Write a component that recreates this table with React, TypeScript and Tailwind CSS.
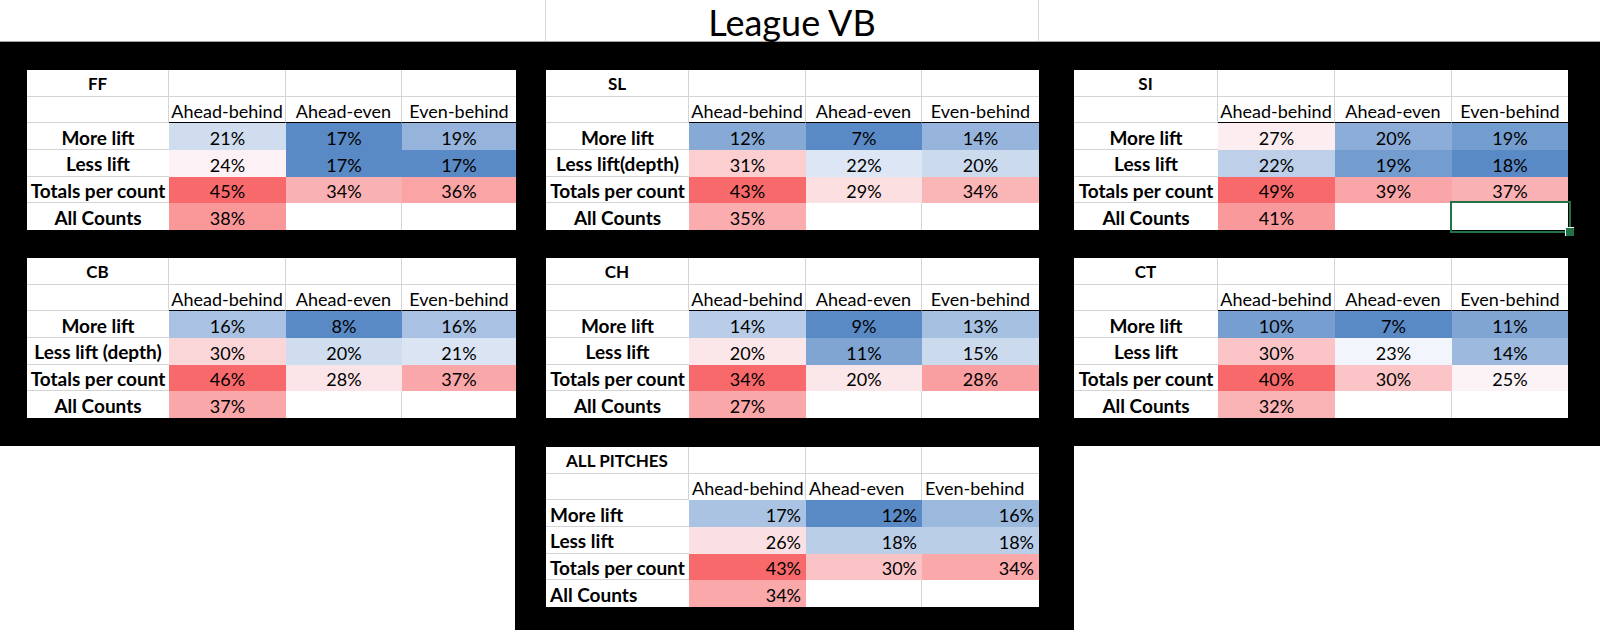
import React from "react";

type TableData = {
  title: string;
  ll: string;
  more: number[];
  less: number[];
  totals: number[];
  all: number;
};

const RED = [248, 105, 107];
const WHITE = [252, 252, 255];
const BLUE = [90, 138, 198];

function mix(a: number[], b: number[], t: number) {
  const c = a.map((x, i) => Math.round(x + (b[i] - x) * t));
  return `rgb(${c[0]}, ${c[1]}, ${c[2]})`;
}

function makeScale(values: number[]) {
  const s = [...values].sort((a, b) => a - b);
  const n = s.length;
  const pos = (n - 1) * 0.5;
  const lo = Math.floor(pos);
  const hi = Math.ceil(pos);
  const mid = s[lo] + (s[hi] - s[lo]) * (pos - lo);
  const min = s[0];
  const max = s[n - 1];
  return (v: number) => {
    if (v <= mid) {
      const t = mid === min ? 0 : (mid - v) / (mid - min);
      return mix(WHITE, BLUE, t);
    }
    const t = max === mid ? 0 : (v - mid) / (max - mid);
    return mix(WHITE, RED, t);
  };
}

const COLS_A = "grid-cols-[142px_117px_116px_114px]";
const COLS_B = "grid-cols-[143px_117px_116px_117px]";
const COLS_C = "grid-cols-[144px_117px_117px_116px]";

function Table({
  data,
  cols,
  variant = "main",
  selected = false,
}: {
  data: TableData;
  cols: string;
  variant?: "main" | "all";
  selected?: boolean;
}) {
  const scale = makeScale([
    ...data.more,
    ...data.less,
    ...data.totals,
    data.all,
  ]);
  const text: string[][] = [
    [data.title, "", "", ""],
    ["", "Ahead-behind", "Ahead-even", "Even-behind"],
    ["More lift", ...data.more.map((v) => `${v}%`)],
    [data.ll, ...data.less.map((v) => `${v}%`)],
    ["Totals per count", ...data.totals.map((v) => `${v}%`)],
    ["All Counts", `${data.all}%`, "", ""],
  ];
  const fill: (string | null)[][] = [
    [null, null, null, null],
    [null, null, null, null],
    [null, ...data.more.map(scale)],
    [null, ...data.less.map(scale)],
    [null, ...data.totals.map(scale)],
    [null, scale(data.all), null, null],
  ];

  const cells: React.ReactNode[] = [];
  for (let r = 0; r < 6; r++) {
    for (let c = 0; c < 4; c++) {
      const f = fill[r][c];
      const right = c < 3 && !f && !fill[r][c + 1];
      const headerLine = variant === "main" && r === 1 && c > 0;
      const bottom = headerLine || (r < 5 && !f && !fill[r + 1][c]);
      const size =
        c === 0
          ? r === 0
            ? "text-[17px] font-bold"
            : "text-[19px] font-bold"
          : "text-[18px]";
      let align = "justify-center";
      if (variant === "all" && r > 0) {
        if (c === 0) align = "justify-start pl-[4px]";
        else if (r === 1) align = "justify-start pl-[3px]";
        else align = "justify-end pr-[5px]";
      }
      const isSel = selected && r === 5 && c === 3;
      cells.push(
        <div
          key={`${r}-${c}`}
          className={[
            "relative flex items-center whitespace-nowrap",
            align,
            size,
            right ? "border-r border-r-[#d4d4d4]" : "",
            bottom
              ? headerLine
                ? "border-b border-b-black"
                : "border-b border-b-[#d4d4d4]"
              : "",
          ].join(" ")}
          style={f ? { backgroundColor: f } : undefined}
        >
          <span className="pt-[3px]">{text[r][c]}</span>
          {isSel && (
            <>
              <div className="absolute -left-[2px] -top-[2px] -right-[3px] -bottom-[3px] z-10 border-2 border-[#217346]" />
              <div className="absolute -right-[6px] -bottom-[6px] z-20 h-[9px] w-[9px] border-l border-t border-white bg-[#217346]" />
            </>
          )}
        </div>
      );
    }
  }

  return (
    <div
      className={`grid ${cols} grid-rows-[26.67px_26.67px_26.67px_26.67px_26.67px_26.67px] bg-white leading-[20px] text-black`}
    >
      {cells}
    </div>
  );
}

const FF: TableData = {
  title: "FF",
  ll: "Less lift",
  more: [21, 17, 19],
  less: [24, 17, 17],
  totals: [45, 34, 36],
  all: 38,
};
const SL: TableData = {
  title: "SL",
  ll: "Less lift(depth)",
  more: [12, 7, 14],
  less: [31, 22, 20],
  totals: [43, 29, 34],
  all: 35,
};
const SI: TableData = {
  title: "SI",
  ll: "Less lift",
  more: [27, 20, 19],
  less: [22, 19, 18],
  totals: [49, 39, 37],
  all: 41,
};
const CB: TableData = {
  title: "CB",
  ll: "Less lift (depth)",
  more: [16, 8, 16],
  less: [30, 20, 21],
  totals: [46, 28, 37],
  all: 37,
};
const CH: TableData = {
  title: "CH",
  ll: "Less lift",
  more: [14, 9, 13],
  less: [20, 11, 15],
  totals: [34, 20, 28],
  all: 27,
};
const CT: TableData = {
  title: "CT",
  ll: "Less lift",
  more: [10, 7, 11],
  less: [30, 23, 14],
  totals: [40, 30, 25],
  all: 32,
};
const ALL: TableData = {
  title: "ALL PITCHES",
  ll: "Less lift",
  more: [17, 12, 16],
  less: [26, 18, 18],
  totals: [43, 30, 34],
  all: 34,
};

export default function App() {
  return (
    <div className="h-[630px] w-[1600px] overflow-hidden bg-white font-[Lato,'Liberation_Sans',sans-serif]">
      {/* Title row */}
      <div className="flex h-[42px] border-b border-b-[#a3a3a3]">
        <div className="w-[546px] border-r border-r-[#d9d9d9]" />
        <div className="w-[493px] border-r border-r-[#d9d9d9] text-center">
          <div className="text-[36px] leading-[44px] text-black">League VB</div>
        </div>
        <div className="flex-1" />
      </div>

      {/* Black block with six tables */}
      <div className="flex flex-col gap-[28px] bg-black pb-[28px] pl-[27px] pt-[28px]">
        <div className="flex">
          <div className="w-[489px]">
            <Table data={FF} cols={COLS_A} />
          </div>
          <div className="ml-[30px] w-[493px]">
            <Table data={SL} cols={COLS_B} />
          </div>
          <div className="ml-[35px] w-[494px]">
            <Table data={SI} cols={COLS_C} selected />
          </div>
        </div>
        <div className="flex">
          <div className="w-[489px]">
            <Table data={CB} cols={COLS_A} />
          </div>
          <div className="ml-[30px] w-[493px]">
            <Table data={CH} cols={COLS_B} />
          </div>
          <div className="ml-[35px] w-[494px]">
            <Table data={CT} cols={COLS_C} />
          </div>
        </div>
      </div>

      {/* Bottom: ALL PITCHES */}
      <div className="flex h-[184px]">
        <div className="w-[515px] bg-white" />
        <div className="w-[559px] bg-black pl-[31px] pt-[1px]">
          <div className="w-[493px]">
            <Table data={ALL} cols={COLS_B} variant="all" />
          </div>
        </div>
        <div className="flex-1 bg-white" />
      </div>
    </div>
  );
}
